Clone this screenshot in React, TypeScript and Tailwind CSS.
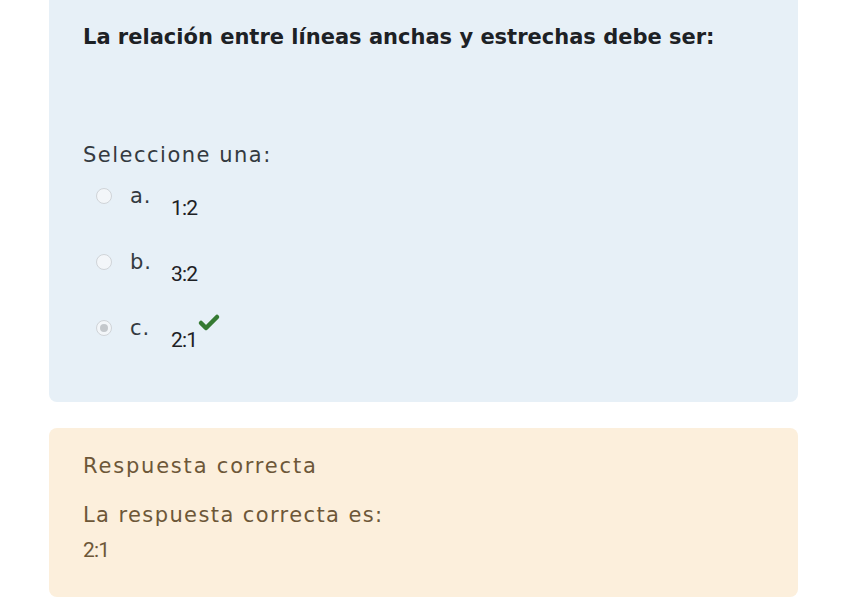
import { Check } from 'lucide-react';

interface Option {
  letter: string;
  text: string;
  checked: boolean;
  correct?: boolean;
}

const options: Option[] = [
  { letter: 'a.', text: '1:2', checked: false },
  { letter: 'b.', text: '3:2', checked: false },
  { letter: 'c.', text: '2:1', checked: true, correct: true },
];

export default function App() {
  return (
    <div className="min-h-[599px] w-[848px] bg-white pl-[49px] font-['DejaVu_Sans',sans-serif]">
      {/* Question */}
      <div className="w-[749px] h-[402px] rounded-b-lg bg-[#e7f0f7] px-[34px] pt-[23px]">
        <h2 className="text-[21px] leading-7 font-semibold text-[#1d2125]">
          La relación entre líneas anchas y estrechas debe ser:
        </h2>

        <p className="mt-[90px] text-[21px] leading-7 text-[#343a40] tracking-[1.5px]">Seleccione una:</p>

        <div className="mt-[13px] flex flex-col gap-[38px]">
          {options.map((opt) => (
            <div key={opt.letter} className="flex items-start h-[28px]">
              <span className="ml-[13px] mt-[6px] w-4 h-4 rounded-full border border-[#d0d4d8] bg-[#f3f6f9] flex items-center justify-center">
                {opt.checked && <span className="w-2 h-2 rounded-full bg-[#c4c8cc]" />}
              </span>
              <span className="ml-[18px] text-[21px] leading-7 text-[#343a40] w-[41px] tracking-[1px]">{opt.letter}</span>
              <span className="mt-[12px] text-[21px] leading-7 text-[#1d2125] font-['Roboto',sans-serif] tracking-[-0.8px]">
                {opt.text}
              </span>
              {opt.correct && (
                <Check className="-mt-[3px] w-6 h-6 text-[#357a32]" strokeWidth={4.5} />
              )}
            </div>
          ))}
        </div>
      </div>

      {/* Feedback */}
      <div className="mt-[26px] w-[749px] h-[169px] rounded-lg bg-[#fcefdc] px-[34px] pt-[24px] text-[#6d5738] tracking-[1.5px]">
        <p className="text-[21px] leading-7 tracking-[1.8px]">Respuesta correcta</p>
        <p className="mt-[21px] text-[21px] leading-7 tracking-[1.4px]">La respuesta correcta es:</p>
        <p className="mt-[7px] text-[21px] leading-7 font-['Roboto',sans-serif] tracking-[-0.8px]">2:1</p>
      </div>
    </div>
  );
}
